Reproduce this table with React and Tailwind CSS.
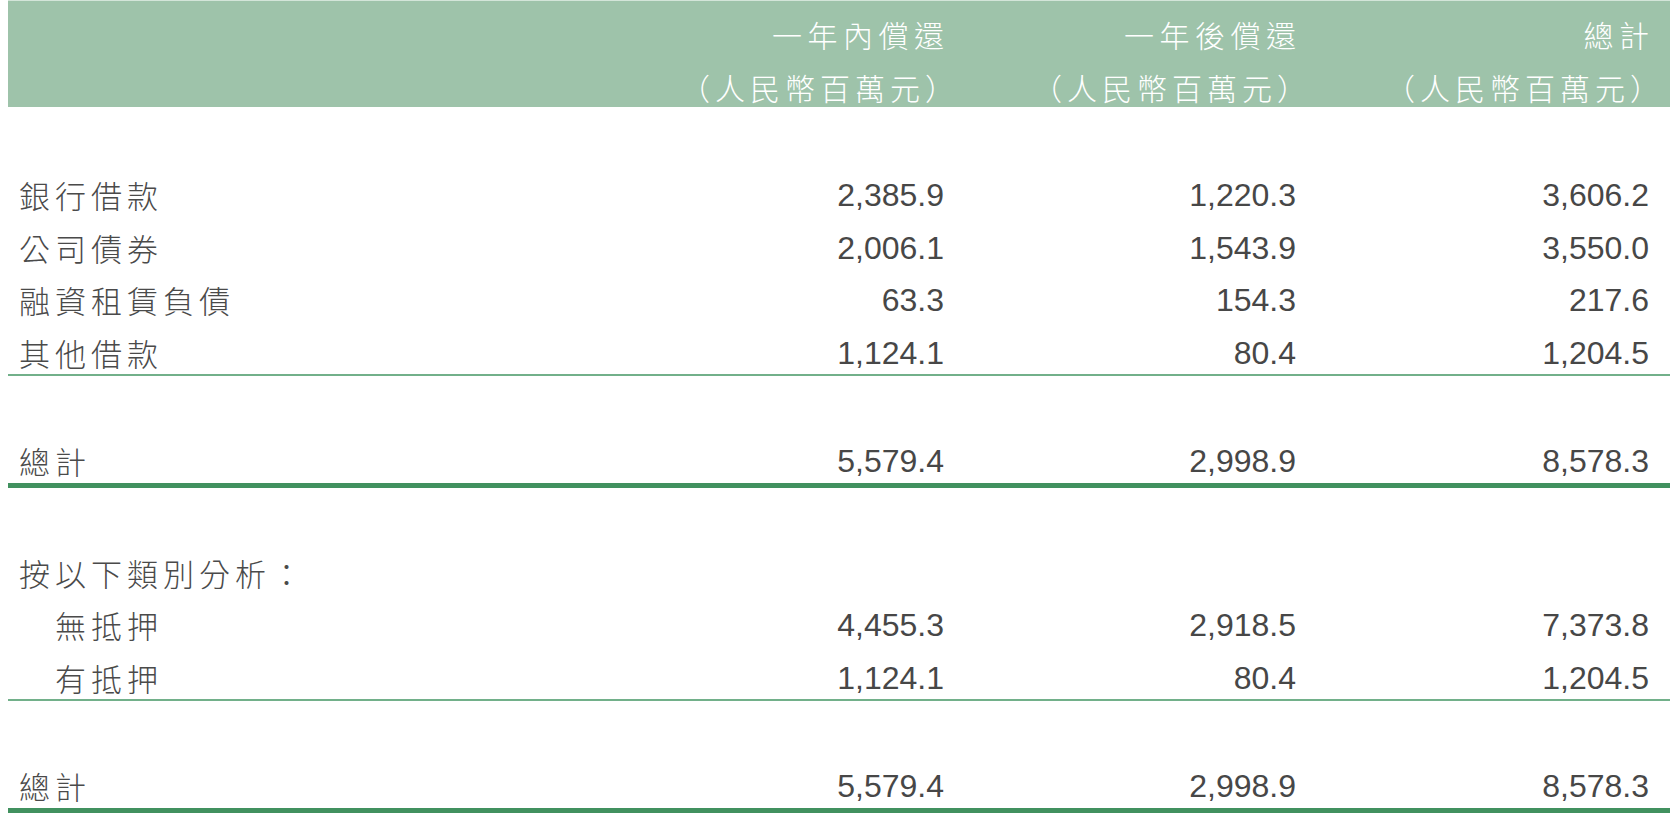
import React from "react";

const groupA = [
  ["銀行借款", "2,385.9", "1,220.3", "3,606.2"],
  ["公司債券", "2,006.1", "1,543.9", "3,550.0"],
  ["融資租賃負債", "63.3", "154.3", "217.6"],
  ["其他借款", "1,124.1", "80.4", "1,204.5"],
];

const groupB = [
  ["無抵押", "4,455.3", "2,918.5", "7,373.8"],
  ["有抵押", "1,124.1", "80.4", "1,204.5"],
];

const totals = ["總計", "5,579.4", "2,998.9", "8,578.3"];

// row height 52.5px, plus whatever rule sits under it
const Row = ({ cells, indent = false, className = "h-[52.5px]" }) => {
  return (
    <div
      className={`grid grid-cols-[1fr_300px_352px_353px] pt-[10px] pl-[11px] pr-[21px] leading-[42.5px] ${className}`}
    >
      <div
        className={`font-['Noto_Sans_CJK_TC',sans-serif] font-light text-[31px] tracking-[5px] text-[#4a4a4a] whitespace-nowrap ${
          indent ? "pl-[36px]" : ""
        }`}
      >
        {cells[0]}
      </div>
      {cells.slice(1).map((v, i) => (
        <div
          key={i}
          className="font-['Liberation_Sans',Arial,sans-serif] text-[32px] text-right text-[#474747]"
        >
          {v}
        </div>
      ))}
    </div>
  );
};

const HeadCell = ({ title }) => (
  <div className="text-right font-['Noto_Sans_CJK_TC',sans-serif] font-light text-[30px] text-white leading-[53px] whitespace-nowrap">
    <div className="tracking-[5.5px] -mr-[5.5px]">{title}</div>
    <div className="tracking-[5px] -mr-[16px]">（人民幣百萬元）</div>
  </div>
);

const App = () => {
  return (
    <div className="w-[1674px] h-[822px] bg-white overflow-hidden">
      <div className="ml-[8px] w-[1662px]">
        {/* Header */}
        <div className="h-[107px] border-t border-[#d3e5d9] bg-[#9ec3aa] grid grid-cols-[1fr_300px_352px_353px] pl-[11px] pr-[21px] pt-[7px]">
          <div />
          <HeadCell title="一年內償還" />
          <HeadCell title="一年後償還" />
          <HeadCell title="總計" />
        </div>

        <div className="h-[57px]" />
        {groupA.map((r, i) => (
          <Row
            key={r[0]}
            cells={r}
            className={
              i === groupA.length - 1
                ? "h-[54.5px] border-b-2 border-[#72b08a]"
                : "h-[52.5px]"
            }
          />
        ))}

        <div className="h-[54px]" />
        <Row cells={totals} className="h-[57.5px] border-b-[5px] border-[#41915f]" />

        <div className="h-[54px]" />
        <Row cells={["按以下類別分析：", "", "", ""]} />
        {groupB.map((r, i) => (
          <Row
            key={r[0]}
            cells={r}
            indent
            className={
              i === groupB.length - 1
                ? "h-[54.5px] border-b-2 border-[#72b08a]"
                : "h-[52.5px]"
            }
          />
        ))}

        <div className="h-[54px]" />
        <Row cells={totals} className="h-[57.5px] border-b-[5px] border-[#41915f]" />
      </div>
    </div>
  );
};

export default App;
